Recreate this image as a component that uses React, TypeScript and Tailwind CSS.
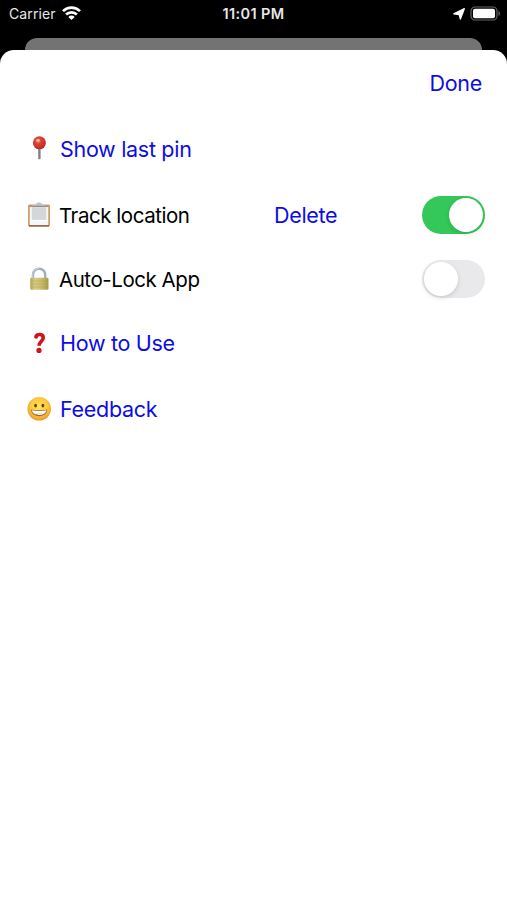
import clsx from 'clsx';
import type { ReactNode } from 'react';

function PinIcon() {
  return (
    <svg width="24" height="26" viewBox="0 0 24 26">
      <defs>
        <radialGradient id="pinHead" cx="0.4" cy="0.35" r="0.65">
          <stop offset="0" stopColor="#f08375" />
          <stop offset="0.35" stopColor="#dc4435" />
          <stop offset="1" stopColor="#b92a20" />
        </radialGradient>
      </defs>
      <path d="M11.2 12h2.4v10.2l-1.2 1.3-1.2-1.3z" fill="#85817f" />
      <circle cx="12.4" cy="6.8" r="6.5" fill="url(#pinHead)" />
      <ellipse cx="11" cy="4.4" rx="1.9" ry="1.4" fill="#fbd0c8" opacity="0.75" />
    </svg>
  );
}

function ClipboardIcon() {
  return (
    <svg width="24" height="26" viewBox="0 0 24 26">
      <rect x="1" y="2.4" width="22" height="22.2" rx="1.6" fill="#cda070" />
      <path d="M2 23.9h20" stroke="#7d5a40" strokeWidth="1.3" />
      <rect x="2.8" y="4.4" width="18.4" height="18.6" fill="#f6f6f8" />
      <rect x="4.8" y="5.2" width="14.4" height="12.8" fill="#d5d6d9" />
      <path d="M3 18.4h18" stroke="#fff" strokeWidth="0.8" />
      <path d="M5 4.6V3.2l4-.8c.4-1.3 1.4-1.9 3-1.9s2.6.6 3 1.9l4 .8v1.4z" fill="#c0c3c7" />
      <path d="M2.5 4.3h19" stroke="#8d8074" strokeWidth="1" />
    </svg>
  );
}

function LockIcon() {
  return (
    <svg width="24" height="26" viewBox="0 0 24 26">
      <defs>
        <linearGradient id="lockBody" x1="0" x2="1" y1="0" y2="0">
          <stop offset="0" stopColor="#b3a65a" />
          <stop offset="0.25" stopColor="#d6cb84" />
          <stop offset="0.6" stopColor="#cbbe6e" />
          <stop offset="1" stopColor="#a89b4e" />
        </linearGradient>
      </defs>
      <path d="M6 13V8.8a6.1 6.1 0 0 1 12.2 0V13" fill="none" stroke="#a3adbc" strokeWidth="2.5" />
      <path d="M5.8 12V8.6a6.2 6.2 0 0 1 6.2-6.1" fill="none" stroke="#cdd6e2" strokeWidth="1" />
      <rect x="3.2" y="11.8" width="18.3" height="12" rx="1.3" fill="url(#lockBody)" />
      <path d="M4 15h16.7M4 18h16.7M4 21h16.7" stroke="#a99c4c" strokeWidth="0.7" opacity="0.5" />
    </svg>
  );
}

function QuestionIcon() {
  return (
    <svg width="24" height="26" viewBox="0 0 24 26">
      <path
        d="M8.8 6.1C10.7 4 16.4 3.5 16.2 8c-.2 3.6-4.200 3.7-4.200 7.800"
        fill="none"
        stroke="#cf1518"
        strokeWidth="3.6"
      />
      <circle cx="9.1" cy="6.7" r="2" fill="#cf1518" />
      <circle cx="12" cy="20.4" r="2.6" fill="#cf1518" />
    </svg>
  );
}

function GrinIcon() {
  return (
    <svg width="24" height="26" viewBox="0 0 24 26">
      <defs>
        <radialGradient id="face" cx="0.5" cy="0.4" r="0.6">
          <stop offset="0" stopColor="#ffe35c" />
          <stop offset="0.6" stopColor="#fdc83c" />
          <stop offset="1" stopColor="#e9972b" />
        </radialGradient>
      </defs>
      <circle cx="12.2" cy="12.8" r="11.8" fill="url(#face)" />
      <ellipse cx="8.6" cy="9.6" rx="1.4" ry="1.9" fill="#65401a" />
      <ellipse cx="15.9" cy="9.6" rx="1.4" ry="1.9" fill="#65401a" />
      <path d="M4.1 13.6c3.2 1 13 1 16.2 0 0 4.2-3.6 6.6-8.1 6.6s-8.1-2.4-8.1-6.6z" fill="#9a6a2c" />
      <path d="M4.8 14.3c3.6 1 11.2 1 14.8 0-.5 3-3.6 4.7-7.4 4.7s-6.9-1.7-7.4-4.7z" fill="#fff" />
      <path d="M6 16.8c3.5 1 9 1 12.4 0" fill="none" stroke="#cfc4b4" strokeWidth="0.5" />
    </svg>
  );
}

function Toggle({ on = false }: { on?: boolean }) {
  return (
    <div
      role="switch"
      aria-checked={on}
      className={clsx(
        'flex h-[38px] w-[63px] items-center rounded-full p-0.5',
        on ? 'justify-end bg-[#34c759]' : 'bg-[#e9e9eb]'
      )}
    >
      <div className="size-[34px] rounded-full bg-white shadow-[0_2px_5px_rgba(0,0,0,0.13)]" />
    </div>
  );
}

function Row({ icon, className, children }: { icon: ReactNode; className?: string; children: ReactNode }) {
  return (
    <div className={clsx('flex items-center', className ?? 'h-[66px]')}>
      <div className="mr-[9px] w-6 shrink-0">{icon}</div>
      {children}
    </div>
  );
}

function StatusBar() {
  return (
    <div className="grid h-[38px] grid-cols-3 items-start pt-1 text-sm leading-5 text-[#e8e8e8]">
      <div className="flex items-center gap-[6px] pl-[9px]">
        <span className="text-[14px] tracking-[0.1px]">Carrier</span>
        <svg width="19" height="14" viewBox="0 0 19 14" className="-mt-0.5" fill="none" stroke="#fff" strokeWidth="2.7">
          <path d="M1 5.1a12.2 12.2 0 0 1 17 0" />
          <path d="M4.1 8.5a7.8 7.8 0 0 1 10.8 0" />
          <path d="M9.5 14 6.3 10.9a4.6 4.6 0 0 1 6.4 0z" fill="#fff" stroke="none" />
        </svg>
      </div>
      <div className="text-center text-[14.5px] font-semibold tracking-[0.35px]">11:01 PM</div>
      <div className="flex h-[18px] items-center justify-end gap-[5px] pr-[6px]">
        <svg width="12" height="12" viewBox="0 0 12 12" className="mt-px">
          <path d="M11.3.7 7.400 11 6.200 6.500.8 5.800z" fill="#fff" stroke="#fff" strokeWidth="1.3" strokeLinejoin="round" />
        </svg>
        <svg width="31" height="15" viewBox="0 0 31 15">
          <rect x="1" y="1" width="26" height="13" rx="4" fill="none" stroke="#666" strokeWidth="1.2" />
          <rect x="3" y="2.8" width="22" height="9.4" rx="2" fill="#fff" />
          <path d="M28.5 5v5c2-.8 2-4.2 0-5z" fill="#666" />
        </svg>
      </div>
    </div>
  );
}

function LinkButton({ className, children }: { className?: string; children: ReactNode }) {
  return <button className={clsx('text-[21.5px] tracking-[-0.3px] text-[#0c0ce8]', className)}>{children}</button>;
}

function Label({ className, children }: { className?: string; children: ReactNode }) {
  return (
    <span className={clsx('-ml-px pt-0.5 text-[20.5px] tracking-[-0.45px] text-black', className)}>{children}</span>
  );
}

export default function App() {
  return (
    <div className="flex h-[900px] w-[507px] flex-col overflow-hidden bg-black font-[Inter,sans-serif]">
      <StatusBar />
      <div className="mx-[25px] h-3 rounded-t-[12px] bg-[#737373]" />
      <main className="flex-1 rounded-t-[14px] bg-white">
        <div className="flex h-[66px] items-center justify-end pr-[25px]">
          <LinkButton>Done</LinkButton>
        </div>
        <div className="pr-[22px] pl-[27px]">
          <Row icon={<PinIcon />}>
            <LinkButton>Show last pin</LinkButton>
          </Row>
          <Row icon={<ClipboardIcon />}>
            <Label className="w-[215px]">Track location</Label>
            <LinkButton className="mr-auto">Delete</LinkButton>
            <Toggle on />
          </Row>
          <Row icon={<LockIcon />} className="h-[62px]">
            <Label className="mr-auto">Auto-Lock App</Label>
            <Toggle />
          </Row>
          <Row icon={<QuestionIcon />}>
            <LinkButton>How to Use</LinkButton>
          </Row>
          <Row icon={<GrinIcon />}>
            <LinkButton>Feedback</LinkButton>
          </Row>
        </div>
      </main>
    </div>
  );
}
